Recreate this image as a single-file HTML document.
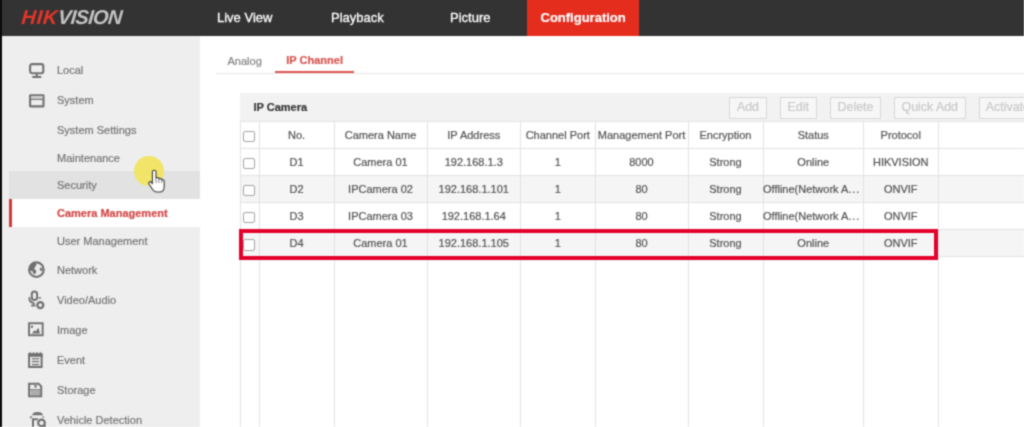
<!DOCTYPE html>
<html><head><meta charset="utf-8">
<style>
*{margin:0;padding:0;box-sizing:border-box}
html,body{width:1024px;height:427px;overflow:hidden;background:#fff;font-family:"Liberation Sans",sans-serif}
.a{position:absolute}
.t{position:absolute;white-space:nowrap;line-height:20px}
.c{text-align:center}
.s{-webkit-text-stroke:0.2px currentColor}
</style></head><body><svg width="0" height="0" style="position:absolute"><filter id="bl" x="0" y="0" width="100%" height="100%" color-interpolation-filters="sRGB"><feConvolveMatrix order="3" kernelMatrix="0.04 0.12 0.04 0.12 0.36 0.12 0.04 0.12 0.04" edgeMode="duplicate"/></filter></svg><div style="position:absolute;left:0;top:0;width:1024px;height:427px;filter:url(#bl)">

<div class="a" style="left:0;top:0;width:2px;height:427px;background:#0a0a0a"></div>
<div class="a" style="left:2px;top:0;width:1022px;height:36px;background:#333333"></div>
<div class="t" style="left:21px;top:7px;font-size:20px;font-weight:bold;font-style:italic;transform-origin:0 17px;transform:skewX(-5deg)"><span style="color:#e8342a;letter-spacing:0.7px">HIK</span><span style="color:#c4c4c4;letter-spacing:-0.7px">VISION</span></div>
<div class="a" style="left:527px;top:0;width:112px;height:36px;background:#e52d1e"></div>
<div class="t s" style="left:217px;top:8.00px;font-size:13px;color:#fff;-webkit-text-stroke:0.3px #fff">Live View</div>
<div class="t s" style="left:331px;top:8.00px;font-size:13px;color:#fff;-webkit-text-stroke:0.3px #fff">Playback</div>
<div class="t s" style="left:450px;top:8.00px;font-size:13px;color:#fff;-webkit-text-stroke:0.3px #fff">Picture</div>
<div class="t s" style="left:540.5px;top:8.20px;font-size:13px;color:#fff;font-weight:bold">Configuration</div>
<div class="a" style="left:2px;top:36px;width:198px;height:391px;background:#eeeeee"></div>
<div class="a" style="left:9px;top:171px;width:191px;height:27.5px;background:#e2e2e2"></div>
<div class="a" style="left:9px;top:198.5px;width:191px;height:28.3px;background:#ffffff"></div>
<div class="a" style="left:9px;top:198.5px;width:3px;height:28.3px;background:#d13a3a"></div>
<div class="t s" style="left:57px;top:60.29px;font-size:11px;color:#747474">Local</div>
<div class="t s" style="left:57px;top:90.49px;font-size:11px;color:#747474">System</div>
<div class="t s" style="left:57px;top:119.79px;font-size:11px;color:#747474">System Settings</div>
<div class="t s" style="left:57px;top:147.79px;font-size:11px;color:#747474">Maintenance</div>
<div class="t s" style="left:57px;top:175.39px;font-size:11px;color:#747474">Security</div>
<div class="t s" style="left:57px;top:203.39px;font-size:11px;color:#d24646;font-weight:bold">Camera Management</div>
<div class="t s" style="left:57px;top:230.69px;font-size:11px;color:#747474">User Management</div>
<div class="t s" style="left:57px;top:259.69px;font-size:11px;color:#747474">Network</div>
<div class="t s" style="left:57px;top:289.69px;font-size:11px;color:#747474">Video/Audio</div>
<div class="t s" style="left:57px;top:319.69px;font-size:11px;color:#747474">Image</div>
<div class="t s" style="left:57px;top:349.69px;font-size:11px;color:#747474">Event</div>
<div class="t s" style="left:57px;top:379.69px;font-size:11px;color:#747474">Storage</div>
<div class="t s" style="left:57px;top:409.69px;font-size:11px;color:#747474">Vehicle Detection</div>
<div class="t s" style="left:227.5px;top:51.19px;font-size:11px;color:#828282">Analog</div>
<div class="t s" style="left:286.3px;top:50.19px;font-size:11px;color:#d9534f;font-weight:bold">IP Channel</div>
<div class="a" style="left:216px;top:73px;width:808px;height:1px;background:#e6e6e6"></div>
<div class="a" style="left:275px;top:71px;width:79px;height:2px;background:#e05550"></div>
<div class="a" style="left:240px;top:93px;width:784px;height:28px;background:#f2f2f2"></div>
<div class="t s" style="left:253.5px;top:97.39px;font-size:11px;color:#333;font-weight:bold">IP Camera</div>
<div class="a" style="left:729px;top:96.5px;width:38px;height:22px;border:1px solid #d8d8d8;background:#f7f7f7"></div>
<div class="t c s" style="left:729px;width:38px;top:97.30px;font-size:12.4px;color:#c8c8c8">Add</div>
<div class="a" style="left:779.5px;top:96.5px;width:37.5px;height:22px;border:1px solid #d8d8d8;background:#f7f7f7"></div>
<div class="t c s" style="left:779.5px;width:37.5px;top:97.30px;font-size:12.4px;color:#c8c8c8">Edit</div>
<div class="a" style="left:830px;top:96.5px;width:51px;height:22px;border:1px solid #d8d8d8;background:#f7f7f7"></div>
<div class="t c s" style="left:830px;width:51px;top:97.30px;font-size:12.4px;color:#c8c8c8">Delete</div>
<div class="a" style="left:893.5px;top:96.5px;width:72.5px;height:22px;border:1px solid #d8d8d8;background:#f7f7f7"></div>
<div class="t c s" style="left:893.5px;width:72.5px;top:97.30px;font-size:12.4px;color:#c8c8c8">Quick Add</div>
<div class="a" style="left:979px;top:96.5px;width:61px;height:22px;border:1px solid #d8d8d8;background:#f7f7f7"></div>
<div class="t s" style="left:985.8px;top:97.30px;font-size:12.4px;color:#c8c8c8">Activate</div>
<div class="a" style="left:240px;top:175px;width:784px;height:27.3px;background:#f5f5f5"></div>
<div class="a" style="left:240px;top:229.4px;width:784px;height:27.3px;background:#f5f5f5"></div>
<div class="a" style="left:240px;top:120.5px;width:784px;height:1px;background:#e3e3e3"></div>
<div class="a" style="left:240px;top:147.5px;width:784px;height:1px;background:#e3e3e3"></div>
<div class="a" style="left:240px;top:174.5px;width:784px;height:1px;background:#e3e3e3"></div>
<div class="a" style="left:240px;top:201.8px;width:784px;height:1px;background:#e3e3e3"></div>
<div class="a" style="left:240px;top:228.9px;width:784px;height:1px;background:#e3e3e3"></div>
<div class="a" style="left:240px;top:256.2px;width:784px;height:1px;background:#e3e3e3"></div>
<div class="a" style="left:239.5px;top:121px;width:1px;height:306px;background:#e3e3e3"></div>
<div class="a" style="left:258.5px;top:121px;width:1px;height:306px;background:#e3e3e3"></div>
<div class="a" style="left:333.5px;top:121px;width:1px;height:306px;background:#e3e3e3"></div>
<div class="a" style="left:426.5px;top:121px;width:1px;height:306px;background:#e3e3e3"></div>
<div class="a" style="left:520.0px;top:121px;width:1px;height:306px;background:#e3e3e3"></div>
<div class="a" style="left:594.5px;top:121px;width:1px;height:306px;background:#e3e3e3"></div>
<div class="a" style="left:687.5px;top:121px;width:1px;height:306px;background:#e3e3e3"></div>
<div class="a" style="left:762.5px;top:121px;width:1px;height:306px;background:#e3e3e3"></div>
<div class="a" style="left:863.0px;top:121px;width:1px;height:306px;background:#e3e3e3"></div>
<div class="a" style="left:937.5px;top:121px;width:1px;height:306px;background:#e3e3e3"></div>
<div class="t c s" style="left:259px;width:75px;top:125.19px;font-size:11px;color:#525252">No.</div>
<div class="t c s" style="left:334px;width:93px;top:125.19px;font-size:11px;color:#525252">Camera Name</div>
<div class="t c s" style="left:427px;width:93.5px;top:125.19px;font-size:11px;color:#525252">IP Address</div>
<div class="t c s" style="left:520.5px;width:74.5px;top:125.19px;font-size:11px;color:#525252">Channel Port</div>
<div class="t c s" style="left:595px;width:93px;top:125.19px;font-size:11px;color:#525252">Management Port</div>
<div class="t c s" style="left:688px;width:75px;top:125.19px;font-size:11px;color:#525252">Encryption</div>
<div class="t c s" style="left:763px;width:100.5px;top:125.19px;font-size:11px;color:#525252">Status</div>
<div class="t c s" style="left:863.5px;width:74.5px;top:125.19px;font-size:11px;color:#525252">Protocol</div>
<div class="t c s" style="left:259px;width:75px;top:152.09px;font-size:11px;color:#525252">D1</div>
<div class="t c s" style="left:334px;width:93px;top:152.09px;font-size:11px;color:#525252">Camera 01</div>
<div class="t c s" style="left:427px;width:93.5px;top:152.09px;font-size:11px;color:#525252">192.168.1.3</div>
<div class="t c s" style="left:520.5px;width:74.5px;top:152.09px;font-size:11px;color:#525252">1</div>
<div class="t c s" style="left:595px;width:93px;top:152.09px;font-size:11px;color:#525252">8000</div>
<div class="t c s" style="left:688px;width:75px;top:152.09px;font-size:11px;color:#525252">Strong</div>
<div class="t c s" style="left:763px;width:100.5px;top:152.09px;font-size:11px;color:#525252">Online</div>
<div class="t c s" style="left:863.5px;width:74.5px;top:152.09px;font-size:11px;color:#525252">HIKVISION</div>
<div class="t c s" style="left:259px;width:75px;top:178.99px;font-size:11px;color:#525252">D2</div>
<div class="t c s" style="left:334px;width:93px;top:178.99px;font-size:11px;color:#525252">IPCamera 02</div>
<div class="t c s" style="left:427px;width:93.5px;top:178.99px;font-size:11px;color:#525252">192.168.1.101</div>
<div class="t c s" style="left:520.5px;width:74.5px;top:178.99px;font-size:11px;color:#525252">1</div>
<div class="t c s" style="left:595px;width:93px;top:178.99px;font-size:11px;color:#525252">80</div>
<div class="t c s" style="left:688px;width:75px;top:178.99px;font-size:11px;color:#525252">Strong</div>
<div class="t s" style="left:763px;top:178.99px;font-size:11px;color:#525252">Offline(Network A<span style='letter-spacing:0.9px'>...</span></div>
<div class="t c s" style="left:863.5px;width:74.5px;top:178.99px;font-size:11px;color:#525252">ONVIF</div>
<div class="t c s" style="left:259px;width:75px;top:206.19px;font-size:11px;color:#525252">D3</div>
<div class="t c s" style="left:334px;width:93px;top:206.19px;font-size:11px;color:#525252">IPCamera 03</div>
<div class="t c s" style="left:427px;width:93.5px;top:206.19px;font-size:11px;color:#525252">192.168.1.64</div>
<div class="t c s" style="left:520.5px;width:74.5px;top:206.19px;font-size:11px;color:#525252">1</div>
<div class="t c s" style="left:595px;width:93px;top:206.19px;font-size:11px;color:#525252">80</div>
<div class="t c s" style="left:688px;width:75px;top:206.19px;font-size:11px;color:#525252">Strong</div>
<div class="t s" style="left:763px;top:206.19px;font-size:11px;color:#525252">Offline(Network A<span style='letter-spacing:0.9px'>...</span></div>
<div class="t c s" style="left:863.5px;width:74.5px;top:206.19px;font-size:11px;color:#525252">ONVIF</div>
<div class="t c s" style="left:259px;width:75px;top:233.39px;font-size:11px;color:#525252">D4</div>
<div class="t c s" style="left:334px;width:93px;top:233.39px;font-size:11px;color:#525252">Camera 01</div>
<div class="t c s" style="left:427px;width:93.5px;top:233.39px;font-size:11px;color:#525252">192.168.1.105</div>
<div class="t c s" style="left:520.5px;width:74.5px;top:233.39px;font-size:11px;color:#525252">1</div>
<div class="t c s" style="left:595px;width:93px;top:233.39px;font-size:11px;color:#525252">80</div>
<div class="t c s" style="left:688px;width:75px;top:233.39px;font-size:11px;color:#525252">Strong</div>
<div class="t c s" style="left:763px;width:100.5px;top:233.39px;font-size:11px;color:#525252">Online</div>
<div class="t c s" style="left:863.5px;width:74.5px;top:233.39px;font-size:11px;color:#525252">ONVIF</div>
<div class="a" style="left:243px;top:130.6px;width:11.5px;height:11.5px;border:1px solid #a3a3a3;border-radius:2px;background:#fff"></div>
<div class="a" style="left:243px;top:157.6px;width:11.5px;height:11.5px;border:1px solid #a3a3a3;border-radius:2px;background:#fff"></div>
<div class="a" style="left:243px;top:184.6px;width:11.5px;height:11.5px;border:1px solid #a3a3a3;border-radius:2px;background:#fff"></div>
<div class="a" style="left:243px;top:211.9px;width:11.5px;height:11.5px;border:1px solid #a3a3a3;border-radius:2px;background:#fff"></div>
<div class="a" style="left:243px;top:239.0px;width:11.5px;height:11.5px;border:1px solid #a3a3a3;border-radius:2px;background:#fff"></div>
<div class="a" style="left:239px;top:229px;width:699px;height:30.5px;border:4px solid #e3002b"></div>
<svg class="a" style="left:26px;top:60px" width="20" height="20" viewBox="0 0 20 20"><rect x="4.1" y="4.1" width="13.2" height="9.1" rx="2" stroke="#707070" stroke-width="2.1" fill="none"/><rect x="9.7" y="13" width="2.1" height="3.5" fill="#707070"/><rect x="6.2" y="16" width="9.1" height="2" rx="0.5" fill="#707070"/></svg>
<svg class="a" style="left:26px;top:92px" width="20" height="18" viewBox="0 0 20 18"><rect x="4.1" y="3.3" width="13.4" height="11.1" rx="0.4" stroke="#707070" stroke-width="2.1" fill="none"/><rect x="4" y="6.5" width="13.6" height="1.4" fill="#707070"/><rect x="5" y="4.3" width="11.6" height="2.2" fill="#cfcfcf"/></svg>
<svg class="a" style="left:26px;top:260px" width="20" height="20" viewBox="0 0 20 20"><circle cx="10.4" cy="9.7" r="7.3" stroke="#707070" stroke-width="2.1" fill="#ececec"/><path d="M4 5.5 C5.5 3.5 7.5 2.8 9.8 2.6 L10.6 4.5 L9.2 7 L8 8.6 L10 10.5 L10.3 12.2 L8.5 14.5 L7.5 13.6 L6.5 11.2 L4 10.5 C3.3 9 3.3 7 4 5.5Z" fill="#707070"/><path d="M13.8 7.6 L16.4 8.6 L16.6 11 L13.8 10.4Z" fill="#707070"/><path d="M5 12.5 L7 14 L6 15.5 L4.5 14Z" fill="#9a9a9a"/></svg>
<svg class="a" style="left:26px;top:286px" width="20" height="24" viewBox="0 0 20 24"><rect x="5.8" y="5.5" width="5.3" height="8.4" rx="2.65" stroke="#707070" stroke-width="2" fill="none"/><path d="M3.4 11.2 C3.2 14.5 4.5 16.5 7.5 16.8" stroke="#707070" stroke-width="1.9" fill="none"/><rect x="12.5" y="11.2" width="2.4" height="1.5" fill="#707070"/><rect x="6.8" y="16.5" width="1.9" height="2.2" fill="#707070"/><rect x="5.2" y="18.6" width="4.2" height="1.9" fill="#707070"/><circle cx="14.3" cy="19.1" r="3" stroke="#707070" stroke-width="2.3" fill="none"/></svg>
<svg class="a" style="left:26px;top:320px" width="20" height="20" viewBox="0 0 20 20"><rect x="3.05" y="3.25" width="13.6" height="12" stroke="#707070" stroke-width="1.9" fill="none"/><circle cx="5.9" cy="6.8" r="1.2" fill="#707070"/><path d="M6 13.6 L8.2 10.3 L9.6 11.4 L12.4 7.8 L14 13.6Z" fill="#707070"/></svg>
<svg class="a" style="left:26px;top:350px" width="20" height="20" viewBox="0 0 20 20"><rect x="3.1" y="4.3" width="12.5" height="12.7" stroke="#707070" stroke-width="2" fill="none"/><rect x="2.1" y="3.8" width="14.5" height="3" fill="#707070"/><circle cx="4" cy="3.2" r="1" fill="#707070"/><circle cx="7.5" cy="3.2" r="1" fill="#707070"/><circle cx="11" cy="3.2" r="1" fill="#707070"/><circle cx="14.5" cy="3.2" r="1" fill="#707070"/><rect x="5.9" y="8.1" width="7.2" height="1.3" fill="#707070"/><rect x="5.9" y="10.9" width="7.2" height="1.3" fill="#707070"/><rect x="5.9" y="13.9" width="7.2" height="1.3" fill="#707070"/></svg>
<svg class="a" style="left:26px;top:380px" width="20" height="20" viewBox="0 0 20 20"><path d="M3.1 3.8 L12.6 3.8 L15.2 6.4 L15.2 16.3 L3.1 16.3Z" stroke="#707070" stroke-width="2" fill="none" stroke-linejoin="miter"/><rect x="8.4" y="5.2" width="2.4" height="2.3" fill="#707070"/><rect x="4" y="9.2" width="10.3" height="1.2" fill="#707070"/><rect x="4.7" y="10.5" width="9.3" height="4.8" fill="#a0a0a0"/><rect x="5.5" y="11.6" width="7.7" height="0.9" fill="#bdbdbd"/><rect x="5.5" y="13.5" width="7.7" height="0.9" fill="#bdbdbd"/></svg>
<svg class="a" style="left:26px;top:407px" width="20" height="20" viewBox="0 0 20 20"><path d="M6.2 8.2 C6.4 5.8 8.5 5 11.5 5 C14.5 5 16.7 5.8 16.9 8.2Z" fill="#707070"/><rect x="3.8" y="9" width="2.3" height="2.5" fill="#9a9a9a"/><rect x="16.5" y="9" width="1.5" height="2" fill="#9a9a9a"/><path d="M6.1 12.2 L12 12.2 M7 12.2 L7 20" stroke="#707070" stroke-width="2"/><circle cx="15.5" cy="15.9" r="3.3" stroke="#707070" stroke-width="2.2" fill="#eeeeee"/><path d="M17.8 18.3 L20 20.5" stroke="#707070" stroke-width="2.2"/></svg>
<div class="a" style="left:134px;top:155.5px;width:30px;height:30.5px;border-radius:50%;background:#f2e468"></div>
<svg class="a" style="left:146px;top:168px" width="22" height="27" viewBox="0 0 22 27"><path d="M8.2 2.2 C9.3 2.2 10 3 10 4 L10 10.2 C10.4 9.6 11 9.4 11.6 9.5 C12.3 9.6 12.8 10.2 12.9 10.9 C13.3 10.4 13.9 10.2 14.5 10.4 C15.2 10.6 15.6 11.2 15.7 11.9 C16.1 11.6 16.6 11.5 17.1 11.7 C17.8 12 18.2 12.6 18.2 13.3 L18.2 18.5 C18.2 21.5 16.5 24 13.5 24 L11 24 C9 24 7.6 23 6.6 21.5 L3 16 C2.5 15.2 2.7 14.3 3.4 13.9 C4.1 13.5 5 13.7 5.5 14.4 L6.4 15.7 L6.4 4 C6.4 3 7.1 2.2 8.2 2.2Z" fill="#fff" stroke="#3a3a3a" stroke-width="1.1" stroke-linejoin="round"/><path d="M10 10.5 L10 15 M12.9 11 L12.9 15 M15.7 12 L15.7 15" stroke="#666" stroke-width="0.8"/></svg>
</div></body></html>
